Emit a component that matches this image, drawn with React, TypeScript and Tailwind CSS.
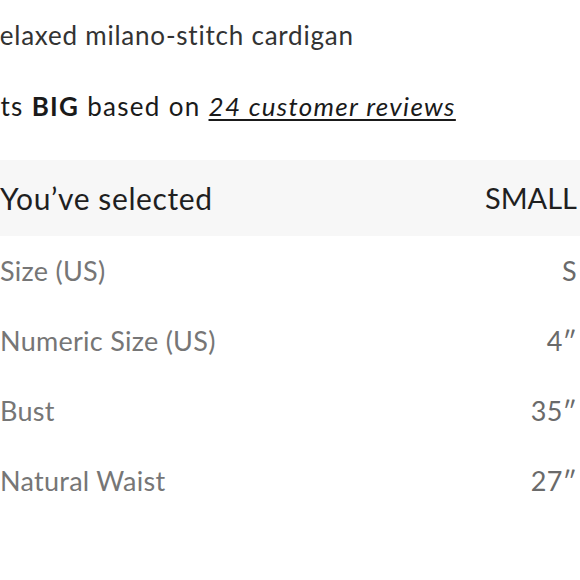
import React from "react"

const rows = [
  { label: "Size (US)", value: "S" },
  { label: "Numeric Size (US)", value: "4\u2033" },
  { label: "Bust", value: "35\u2033" },
  { label: "Natural Waist", value: "27\u2033" },
]

export default function App() {
  return (
    <div className="w-[580px] h-[580px] overflow-hidden bg-white font-['Lato',sans-serif]">
      <div className="pt-[18px] ml-[-10px] text-[26px] leading-[34px] tracking-[0.03em] text-[#333] whitespace-nowrap">
        relaxed milano-stitch cardigan
      </div>
      <div className="mt-[38px] ml-[-23px] text-[26px] leading-[32px] tracking-[0.05em] text-[#1a1a1a] whitespace-nowrap">
        Fits <span className="font-bold">BIG</span> based on{" "}
        <span className="italic underline underline-offset-[3px] decoration-[2px]">24 customer reviews</span>
      </div>
      <div className="mt-[38px] h-[76px] bg-[#f7f7f7] flex items-center justify-between pr-[3px] text-[30px] text-[#1f1f1f]">
        <span className="tracking-[0.02em]">You&rsquo;ve selected</span>
        <span className="text-[29px]">SMALL</span>
      </div>
      <div className="flex flex-col text-[27px] tracking-[0.01em] text-[#767676]">
        {rows.map((r) => (
          <div key={r.label} className="h-[70px] flex items-center justify-between pr-[3px]">
            <span>{r.label}</span>
            <span className="text-[#6a6a6a]">{r.value}</span>
          </div>
        ))}
      </div>
    </div>
  )
}
